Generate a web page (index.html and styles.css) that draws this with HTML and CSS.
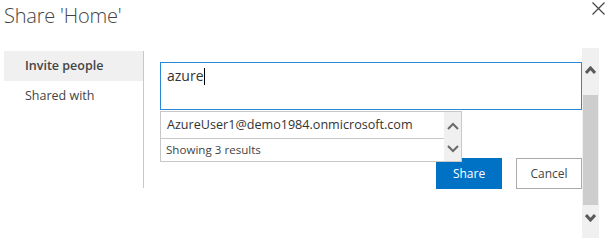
FILE: index.html
```html
<!DOCTYPE html>
<html lang="en">
<head>
  <meta charset="UTF-8">
  <title>Share 'Home'</title>
  <link rel="stylesheet" href="styles.css">
</head>
<body>

  <div class="dialog">
    <!-- title bar -->
    <div class="head">
      <h1 class="title">Share 'Home'</h1>
      <button class="close" aria-label="Close">
        <svg width="13" height="13" viewBox="0 0 13 13"><path d="M0.5 0.5 L12.5 12.5 M12.5 0.5 L0.5 12.5" stroke="#444" stroke-width="1.2" fill="none"/></svg>
      </button>
    </div>

    <div class="main">
      <nav class="nav">
        <div class="nav-item active">Invite people</div>
        <div class="nav-item">Shared with</div>
      </nav>

      <div class="content">
        <div class="picker">
          <div class="input">azure<span class="caret"></span></div>
          <div class="suggest">
            <div class="suggest-list">
              <div class="suggest-row">AzureUser1@demo1984.onmicrosoft.com</div>
              <div class="suggest-row count">Showing 3 results</div>
            </div>
            <div class="mini-scroll">
              <svg width="12" height="8" viewBox="0 0 12 8"><path d="M1 7 L6 2 L11 7" stroke="#6a6a6a" stroke-width="2" fill="none"/></svg>
              <svg width="12" height="8" viewBox="0 0 12 8"><path d="M1 1 L6 6 L11 1" stroke="#6a6a6a" stroke-width="2" fill="none"/></svg>
            </div>
          </div>
        </div>

        <div class="actions">
          <button class="btn primary">Share</button>
          <button class="btn">Cancel</button>
        </div>
      </div>

      <div class="scrollbar">
        <svg width="11" height="8" viewBox="0 0 11 8"><path d="M1 7 L5.5 2 L10 7" stroke="#5a5a5a" stroke-width="3" fill="none"/></svg>
        <div class="thumb"></div>
        <svg width="11" height="8" viewBox="0 0 11 8"><path d="M1 1 L5.5 6 L10 1" stroke="#5a5a5a" stroke-width="3" fill="none"/></svg>
      </div>
    </div>
  </div>

</body>
</html>
```

FILE: styles.css
```css
body {
  margin: 0;
  background: #fff;
  font-family: "Open Sans", "Noto Sans", sans-serif;
  color: #444;
}

.dialog {
  width: 613px;
}

.head {
  display: flex;
  justify-content: space-between;
  align-items: flex-start;
  height: 48px;
}

.title {
  margin: 0;
  padding: 2px 0 0 4px;
  font-size: 20px;
  font-weight: 300;
  line-height: 28px;
  color: #444;
  letter-spacing: -0.2px;
}

.close {
  margin: 2px 8px 0 0;
  padding: 0;
  border: none;
  background: none;
  width: 13px;
  height: 13px;
}

.close svg {
  display: block;
}

.main {
  display: flex;
  align-items: flex-start;
}

/* left menu */
.nav {
  width: 139px;
  height: 137px;
  margin: 3px 0 0 4px;
  border-right: 1px solid #c8c8c8;
}

.nav-item {
  height: 30px;
  line-height: 30px;
  padding-left: 21px;
  font-size: 12.5px;
  color: #444;
}

.nav-item.active {
  background: #f0f0f0;
  font-weight: 600;
}

/* people picker */
.content {
  width: 422px;
  padding: 14px 0 0 16px;
}

.picker {
  position: relative;
}

.input {
  height: 46px;
  border: 1px solid #2b88d8;
  padding: 0 6px;
  font-size: 14px;
  line-height: 26px;
  color: #333;
}

.caret {
  display: inline-block;
  width: 1px;
  height: 17px;
  background: #000;
  vertical-align: -4px;
}

.suggest {
  position: absolute;
  top: 49px;
  left: 0;
  width: 300px;
  height: 49px;
  display: flex;
  background: #fff;
  border: 1px solid #c8c8c8;
}

.suggest-list {
  flex: 1;
}

.suggest-row {
  height: 26px;
  line-height: 26px;
  padding-left: 6px;
  font-size: 12.6px;
  color: #333;
  border-bottom: 1px solid #c8c8c8;
}

.suggest-row.count {
  height: 22px;
  line-height: 22px;
  padding-left: 5px;
  font-size: 11.6px;
  color: #444;
  border-bottom: none;
}

.mini-scroll {
  width: 17px;
  background: #f0f0f0;
  display: flex;
  flex-direction: column;
  justify-content: space-between;
  align-items: center;
  padding: 10px 0 8px;
}

.mini-scroll svg {
  display: block;
}

/* buttons */
.actions {
  display: flex;
  justify-content: flex-end;
  gap: 14px;
  margin-top: 48px;
}

.btn {
  width: 66px;
  height: 31px;
  padding: 0;
  border: 1px solid #ababab;
  background: #fff;
  font-family: inherit;
  font-size: 12px;
  color: #444;
}

.btn.primary {
  background: #0072c6;
  border-color: #0072c6;
  color: #fff;
}

/* page scrollbar */
.scrollbar {
  width: 17px;
  height: 190px;
  background: #f0f0f0;
  display: flex;
  flex-direction: column;
  align-items: center;
}

.scrollbar svg {
  display: block;
  margin-top: 18px;
}

.scrollbar .thumb {
  width: 15px;
  height: 110px;
  margin-top: 21px;
  background: #cdcdcd;
}

.scrollbar .thumb + svg {
  margin-top: 9px;
}
```
